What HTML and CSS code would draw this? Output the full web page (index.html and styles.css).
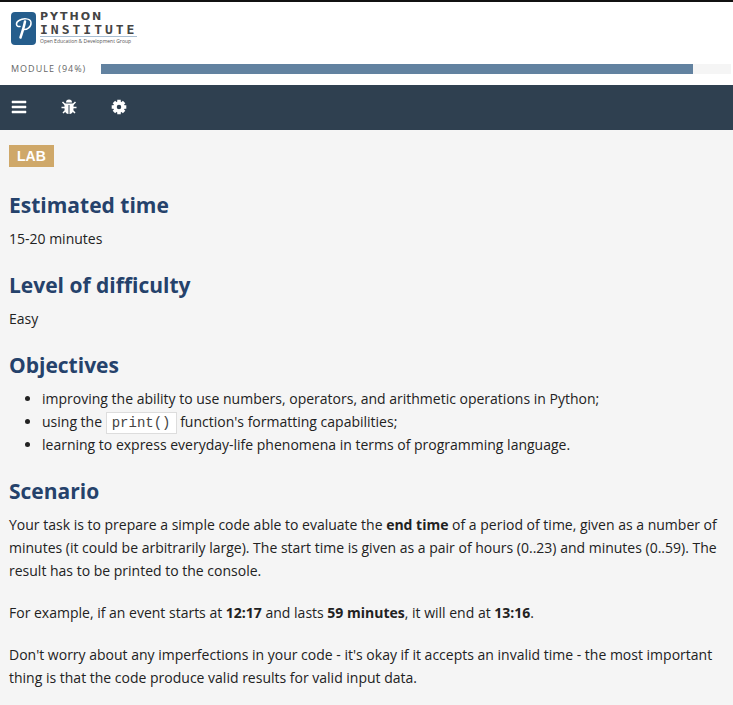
FILE: index.html
```html
<!DOCTYPE html>
<html lang="en">
<head>
<meta charset="utf-8">
<meta name="viewport" content="width=device-width, initial-scale=1">
<title>Python Institute - Lab</title>
<link rel="stylesheet" href="styles.css">
</head>
<body>
<header class="header">
  <a class="logo" href="#">
    <svg class="logo-mark" viewBox="0 0 25 33" aria-hidden="true">
      <rect width="25" height="33" rx="4" fill="#255d8c"/>
      <g fill="none" stroke="#fff" stroke-linecap="round" stroke-linejoin="round">
        <path d="M14 9.500 C13 15 11 21 9.500 25.500" stroke-width="2.500"/>
        <path d="M9 14.500 C4.500 15 4.500 10.500 8 8.500 C12 6 19.500 6 20 10.500 C20.500 15 16 18 12 17.500" stroke-width="1.500"/>
      </g>
    </svg>
    <span class="logo-text">
      <span class="logo-top">PYTHON</span>
      <span class="logo-bottom">INSTITUTE</span>
      <span class="logo-tagline">Open Education &amp; Development Group</span>
    </span>
  </a>
  <div class="module">
    <label class="module-label" for="module-progress">MODULE (94%)</label>
    <progress class="module-progress" id="module-progress" value="94" max="100"></progress>
  </div>
</header>
<nav class="toolbar" aria-label="Course tools">
  <button class="tool" type="button" aria-label="Menu">
    <svg viewBox="0 0 16 16"><path d="M1 2h14v2H1zM1 7h14v2H1zM1 12h14v2H1z" fill="#fff" stroke="#fff" stroke-width=".5"/></svg>
  </button>
  <button class="tool" type="button" aria-label="Report a bug">
    <svg viewBox="0 0 16 16">
      <path d="M5 3.500a3 3 0 0 1 6 0z" fill="#fff"/>
      <path d="M3.500 4.500h9V10c0 3-2 5-4 5V6h-1v9c-2 0-4-2-4-5z" fill="#fff"/>
      <path d="M1.500 3l3 3M14.500 3l-3 3M.5 8.500h4M15.500 8.500h-4M2 14l3-3M14 14l-3-3" fill="none" stroke="#fff" stroke-width="1.500"/>
    </svg>
  </button>
  <button class="tool" type="button" aria-label="Settings">
    <svg viewBox="0 0 16 16">
      <circle cx="8" cy="8" r="4" fill="none" stroke="#fff" stroke-width="3.500"/>
      <g stroke="#fff" stroke-width="3.500">
        <path d="M8 .7v3M8 12.300v3M.7 8h3M12.300 8h3M2.900 2.900l2 2M11.100 11.100l2 2M2.900 13.100l2-2M11.100 4.900l2-2"/>
      </g>
    </svg>
  </button>
</nav>
<main class="content">
  <span class="tag">LAB</span>
  <h2>Estimated time</h2>
  <p>15-20 minutes</p>
  <h2>Level of difficulty</h2>
  <p>Easy</p>
  <h2>Objectives</h2>
  <ul>
    <li>improving the ability to use numbers, operators, and arithmetic operations in Python;</li>
    <li>using the <code>print()</code> function's formatting capabilities;</li>
    <li>learning to express everyday-life phenomena in terms of programming language.</li>
  </ul>
  <h2>Scenario</h2>
  <p>Your task is to prepare a simple code able to evaluate the <strong>end time</strong> of a period of time, given as a number of minutes (it could be arbitrarily large). The start time is given as a pair of hours (0..23) and minutes (0..59). The result has to be printed to the console.</p>
  <p>For example, if an event starts at <strong>12:17</strong> and lasts <strong>59 minutes</strong>, it will end at <strong>13:16</strong>.</p>
  <p>Don't worry about any imperfections in your code - it's okay if it accepts an invalid time - the most important thing is that the code produce valid results for valid input data.</p>
</main>
</body>
</html>
```
FILE: styles.css
```css
* {
  box-sizing: border-box;
}

body {
  margin: 0;
  background: #f5f5f5;
  color: #222;
  font: 14px/23px "Open Sans", "Noto Sans", sans-serif;
}

.header {
  padding: 10px 2px 11px 11px;
  border-top: 2px solid #111;
  background: #fff;
}

.logo {
  display: flex;
  gap: 4px;
  width: max-content;
  color: #444;
  text-decoration: none;
}

.logo-mark {
  width: 25px;
  height: 33px;
}

.logo-text {
  display: flex;
  flex-direction: column;
}

.logo-top {
  font: bold 11px/10px "DejaVu Sans", sans-serif;
  letter-spacing: 2px;
}

.logo-bottom {
  margin-top: 1px;
  border-bottom: 1px solid #a9bfd3;
  font: bold 13px/13px "DejaVu Sans Mono", monospace;
  letter-spacing: 3px;
}

.logo-tagline {
  color: #555;
  font-size: 5px;
  line-height: 8px;
}

.module {
  display: flex;
  align-items: center;
  gap: 15px;
  margin-top: 19px;
}

.module-label {
  color: #666;
  font-size: 9px;
  line-height: 10px;
  letter-spacing: 1px;
}

.module-progress {
  flex: 1;
  height: 10px;
  border: 0;
  background: #f5f5f5;
  appearance: none;
}

.module-progress::-webkit-progress-bar {
  background: #f5f5f5;
}

.module-progress::-webkit-progress-value {
  background: #6282a0;
}

.toolbar {
  display: flex;
  align-items: center;
  gap: 34px;
  height: 45px;
  padding: 0 11px 1px;
  background: #2f4050;
}

.tool {
  width: 16px;
  height: 16px;
  padding: 0;
  border: 0;
  background: none;
  cursor: pointer;
}

.tool svg {
  display: block;
}

.content {
  padding: 15px 9px;
}

.tag {
  display: block;
  width: max-content;
  margin-bottom: 24px;
  padding: 0 8px;
  background: #cfa869;
  color: #fff;
  font: bold 14px/22px "Liberation Sans", Arial, sans-serif;
}

h2 {
  margin: 21px 0 8px;
  color: #25426b;
  font-size: 21px;
  line-height: 28px;
}

p {
  margin: 0 0 19px;
}

ul {
  margin: 0;
  padding-left: 33px;
}

code {
  padding: 2px 5px;
  border: 1px solid #ddd;
  background: #fff;
  color: #444;
  font: 14px/16px "Liberation Mono", "Courier New", monospace;
}
```
